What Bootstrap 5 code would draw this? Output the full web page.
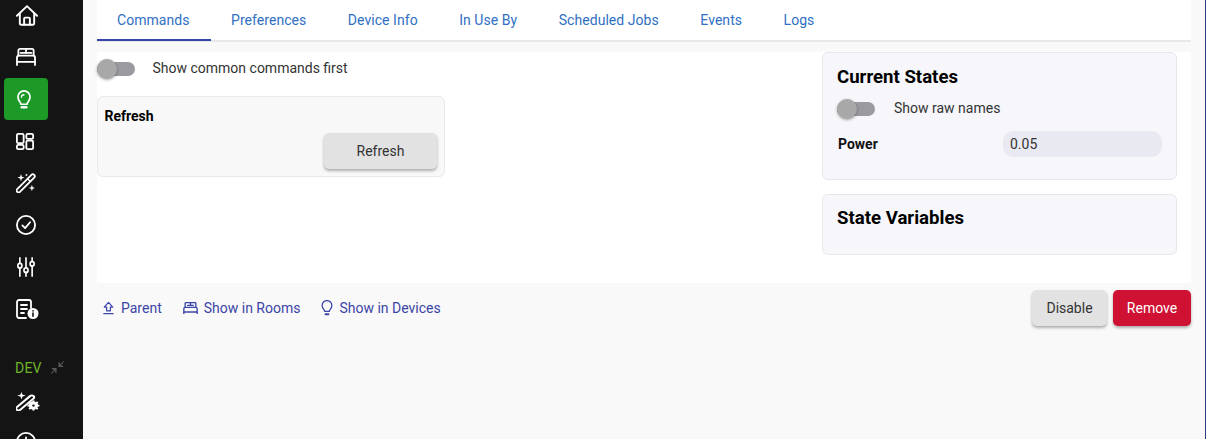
<!DOCTYPE html>
<html lang="en"><head><meta charset="utf-8"><title>Device</title>
<link rel="stylesheet" href="https://cdn.jsdelivr.net/npm/bootstrap@5.3.0/dist/css/bootstrap.min.css">
<style>
html,body{height:439px;overflow:hidden}
body{background:#f9f9f9;font-family:Roboto,"Liberation Sans",sans-serif;font-size:14px;color:#333}
.shell{height:439px}
.side{width:83px;background:#141414;flex:none;overflow:hidden}
.side-item{width:44px;height:42px;margin-left:4px;padding-left:12px;display:flex;align-items:center;justify-content:flex-start;border-radius:4px;color:#fff}
.first-i{margin-top:-6px}
.gear-i{margin-top:-3px}
.last-i{margin-top:-1px}
.i-home{width:22px;height:21px}
.i-bed{width:20px;height:18px}
.i-bulb{width:14px;height:19px;margin-left:1px}
.i-grid{width:18px;height:17px}
.i-20{width:20px;height:20px}
.i-sl{width:18px;height:20px;margin-left:1px}
.i-doc{width:23px;height:20px}
.i-gear{width:24px;height:20px}
.side-on{background:#1c9926}
.side-dev{height:30px;margin:23px 0 0 15px;color:#6fb52a;font-size:14px;display:flex;align-items:center;gap:8px;letter-spacing:.2px}
.side-dev svg{width:15px;height:15px;color:#5a5a5a;margin-top:-2px}
.mainarea{padding:0 14px 0 14px;min-width:0}
.edge{width:1px;flex:none;background:#2e3a82}
.tabbar{background:#fff;height:42px;border-bottom:2px solid #e8e8e8;margin-bottom:10px}
.tab-lnk{padding:0 21.500px 0 20px;height:41px;line-height:40px;color:#2f6fc4;font-size:14px;letter-spacing:.05px;text-decoration:none;border-bottom:2px solid transparent;display:block}
.tab-lnk.cur{border-bottom-color:#3444ab}
.body-panel{background:#fff;height:231px}
.leftcol{width:725px;padding-top:6px}
.swi{width:38px;height:14px;background:#9a9aa0;border-radius:7px;position:relative;display:block;flex:none;margin-top:2px}
.swi::before{content:"";position:absolute;left:0;top:-3px;width:20px;height:20px;border-radius:50%;background:#a8a8a8;box-shadow:0 1px 3px rgba(0,0,0,.35)}
.swrow{height:20px;display:flex;align-items:center;gap:17.500px;color:#333}
.swraw{gap:19px;margin-top:10px}
.cmdcard{width:348px;height:81px;background:#f8f8f8;border:1px solid #e9e9e9;border-radius:6px;margin-top:18px;padding:10px 7px 0 6.500px}
.cmdtitle{font-weight:700;color:#000;font-size:14px;line-height:18px}
.gbtn{background:#e2e2e2;color:#333;border:0;border-radius:5px;box-shadow:0 2px 3px rgba(0,0,0,.3);font-size:14px;height:36px}
.refr{width:113px;margin-top:8px}
.rcol{width:355px}
.statecard{background:#f6f6fb;border:1px solid #e8e8ec;border-radius:6px;padding:13px 14px 0}
.st1{height:128px}
.st2{height:61px;margin-top:14px;padding-top:12px}
.sttitle{font-size:18.600px;font-weight:700;color:#000;line-height:22px}
.powrow{margin-top:13px}
.powval{width:159px;height:26px;background:#e9e9f1;border-radius:11px;line-height:26px;padding-left:7px;color:#333}
.powname{width:166px;font-weight:700;color:#111;padding-left:1px}
.actions{height:50px}
.linkrow{padding-left:4px;gap:20px}
.alnk{color:#3b45a8;text-decoration:none;display:flex;align-items:center;gap:5px;font-size:14px}
.alnk svg{height:16px}
.ic-par{width:15px}.ic-bed{width:17px}.ic-bulb{width:14px;height:17px}
.btnrow{gap:6px}
.redb{background:#cf1233;color:#fff;border:0;border-radius:5px;box-shadow:0 2px 3px rgba(0,0,0,.3);height:36px;width:78px;font-size:14px}
.disb{width:75px}
</style></head><body>
<div class="shell d-flex">
<nav class="side">
  <div class="side-item first-i"><svg class="i-home" viewBox="0.500 1 23 21.500" fill="none" stroke="currentColor" stroke-width="2" stroke-linejoin="round" stroke-linecap="round"><path d="M1.500 12 12 2l10.500 10"/><path d="M4.500 10v10a1.500 1.500 0 0 0 1.500 1.500h12a1.500 1.500 0 0 0 1.500-1.500V10"/><path d="M9 21.500V15a1 1 0 0 1 1-1h4a1 1 0 0 1 1 1v6.500"/></svg></div>
  <div class="side-item"><svg class="i-bed" viewBox="1 2.500 22 20" fill="none" stroke="currentColor" stroke-width="2" stroke-linejoin="round" stroke-linecap="round"><path d="M3.500 11V5.500a2 2 0 0 1 2-2h13a2 2 0 0 1 2 2V11"/><path d="M12 3.500V8"/><path d="M6 8h12"/><path d="M2 13a2 2 0 0 1 2-2h16a2 2 0 0 1 2 2v5H2z"/><path d="M2 18v3.500M22 18v3.500"/></svg></div>
  <div class="side-item side-on"><svg class="i-bulb" viewBox="4 .5 16 22" fill="none" stroke="currentColor" stroke-width="2" stroke-linecap="round" stroke-linejoin="round"><path d="M8.500 17c0-2.500-3.500-4-3.500-8.500a7 7 0 0 1 14 0c0 4.500-3.500 6-3.500 8.500z"/><path d="M9.500 20.500h5" stroke-width="3"/><path d="M9 9a3 3 0 0 1 3-3" stroke-width="1.500"/></svg></div>
  <div class="side-item"><svg class="i-grid" viewBox="2 2 20 20" preserveAspectRatio="none" fill="none" stroke="currentColor" stroke-width="2"><rect x="3" y="3" width="7.500" height="11" rx="1.500"/><rect x="13.500" y="3" width="7.500" height="6" rx="1.500"/><rect x="13.500" y="11" width="7.500" height="10" rx="1.500"/><rect x="3" y="16" width="7.500" height="5" rx="1.500"/></svg></div>
  <div class="side-item"><svg class="i-20" viewBox="2 1 21 22" fill="none" stroke="currentColor" stroke-width="2" stroke-linejoin="round"><path d="M2.800 18.700 18.500 3a2.100 2.100 0 0 1 3 3L5.800 21.700a2.100 2.100 0 0 1-3-3z"/><path d="M14.500 7.500l2.500 2.500" stroke-width="1.500"/><path d="M7 2 8 5l3 1-3 1-1 3-1-3-3-1 3-1zM19 14l.9 2.600 2.600.9-2.600.9-.9 2.600-.9-2.600-2.600-.9 2.600-.9z" fill="currentColor" stroke="none"/><path d="M13 1.500l.5 1.200 1.200.5-1.200.5-.5 1.200-.5-1.200-1.200-.5 1.200-.5z" fill="currentColor" stroke="none"/></svg></div>
  <div class="side-item"><svg class="i-20" viewBox="1 1 22 22" fill="none" stroke="currentColor" stroke-width="2" stroke-linecap="round" stroke-linejoin="round"><circle cx="12" cy="12" r="10"/><path d="m8 12.500 3 3 5.500-6.500"/></svg></div>
  <div class="side-item"><svg class="i-sl" viewBox="1 1 22 22" preserveAspectRatio="none" fill="none" stroke="currentColor" stroke-width="2" stroke-linecap="round"><path d="M4.500 2v6M4.500 13v9M12 2v11M12 18v4M19.500 2v4M19.500 11v11"/><circle cx="4.500" cy="10.500" r="2.500"/><circle cx="12" cy="15.500" r="2.500"/><circle cx="19.500" cy="8.500" r="2.500"/></svg></div>
  <div class="side-item"><svg class="i-doc" viewBox="0 0 23 20" fill="none" stroke="currentColor" stroke-width="1.800" stroke-linecap="round" stroke-linejoin="round"><path d="M10 19H3a2 2 0 0 1-2-2V3a2 2 0 0 1 2-2h10a2 2 0 0 1 2 2v6"/><path d="M5 6h6M5 10h6M5 14h3"/><circle cx="17" cy="14.500" r="5.500" fill="currentColor" stroke="none"/><path d="M17 14v3.200M17 11.800v.2" stroke="#141414" stroke-width="1.600"/></svg></div>
  <div class="side-dev"><span>DEV</span><svg viewBox="0 0 16 16" fill="currentColor"><path d="M15 1.500 14.500 1 10.500 5V2.500H9V7.500h5V6H11.500zM1 14.500l.5.500 4-4v2.500H7V8.500H2V10h2.500z"/></svg></div>
  <div class="side-item gear-i"><svg class="i-gear" viewBox="2 1 22 22" preserveAspectRatio="none" fill="none" stroke="currentColor" stroke-width="2" stroke-linejoin="round"><path d="M2.800 18.700 15 6.500a2.100 2.100 0 0 1 3 3L5.800 21.700a2.100 2.100 0 0 1-3-3z"/><path d="M7 2 8 5l3 1-3 1-1 3-1-3-3-1 3-1z" fill="currentColor" stroke="none"/><circle cx="18" cy="17" r="2.800" stroke-width="3.200"/><path d="M18 11.500v2M18 20.500v2M12.500 17h2M21.500 17h2M14.100 13.100l1.400 1.400M20.500 19.500l1.400 1.400M14.100 20.900l1.400-1.400M20.500 14.500l1.400-1.400" stroke-width="2"/></svg></div>
  <div class="side-item last-i"><svg class="i-20" viewBox="1 1 22 22" fill="none" stroke="currentColor" stroke-width="2" stroke-linecap="round"><circle cx="12" cy="12" r="10"/><path d="M12 7v5l3 2"/></svg></div>
</nav>
<main class="mainarea flex-grow-1">
  <ul class="tabbar nav flex-nowrap">
    <li class="nav-item"><a class="tab-lnk cur" href="#">Commands</a></li>
    <li class="nav-item"><a class="tab-lnk" href="#">Preferences</a></li>
    <li class="nav-item"><a class="tab-lnk" href="#">Device Info</a></li>
    <li class="nav-item"><a class="tab-lnk" href="#">In Use By</a></li>
    <li class="nav-item"><a class="tab-lnk" href="#">Scheduled Jobs</a></li>
    <li class="nav-item"><a class="tab-lnk" href="#">Events</a></li>
    <li class="nav-item"><a class="tab-lnk" href="#">Logs</a></li>
  </ul>
  <section class="body-panel d-flex">
    <div class="leftcol">
      <div class="swrow"><span class="swi"></span><span>Show common commands first</span></div>
      <div class="cmdcard">
        <div class="cmdtitle">Refresh</div>
        <div class="d-flex justify-content-end"><button class="gbtn refr" type="button">Refresh</button></div>
      </div>
    </div>
    <div class="rcol">
      <div class="statecard st1">
        <div class="sttitle">Current States</div>
        <div class="swrow swraw"><span class="swi"></span><span>Show raw names</span></div>
        <div class="d-flex align-items-center powrow"><div class="powname">Power</div><div class="powval">0.05</div></div>
      </div>
      <div class="statecard st2"><div class="sttitle">State Variables</div></div>
    </div>
  </section>
  <div class="actions d-flex align-items-center justify-content-between">
    <div class="d-flex linkrow">
      <a class="alnk" href="#"><svg class="ic-par" viewBox="0 0 16 16" fill="none" stroke="currentColor" stroke-width="1.300" stroke-linejoin="round"><path d="M8 2 3.500 7H6v4h4V7h2.500z"/><path d="M2.500 14h11"/></svg>Parent</a>
      <a class="alnk" href="#"><svg class="ic-bed" viewBox="0 0 24 24" fill="none" stroke="currentColor" stroke-width="2" stroke-linejoin="round"><path d="M4 11V5a1 1 0 0 1 1-1h14a1 1 0 0 1 1 1v6"/><path d="M12 4v4M7 8h10"/><path d="M2 13a2 2 0 0 1 2-2h16a2 2 0 0 1 2 2v5H2z"/><path d="M2 18v3M22 18v3"/></svg>Show in Rooms</a>
      <a class="alnk" href="#"><svg class="ic-bulb" viewBox="0 0 24 28" fill="none" stroke="currentColor" stroke-width="2.200" stroke-linecap="round" stroke-linejoin="round"><path d="M8 20c0-3-4.500-5-4.500-10.500a8.500 8.500 0 0 1 17 0C20.500 15 16 17 16 20z"/><path d="M9.500 25h5" stroke-width="3.500"/></svg>Show in Devices</a>
    </div>
    <div class="d-flex btnrow">
      <button class="gbtn disb" type="button">Disable</button>
      <button class="redb" type="button">Remove</button>
    </div>
  </div>
</main>
<div class="edge"></div>
</div>
<script src="https://cdn.jsdelivr.net/npm/bootstrap@5.3.0/dist/js/bootstrap.bundle.min.js"></script>
</body></html>
